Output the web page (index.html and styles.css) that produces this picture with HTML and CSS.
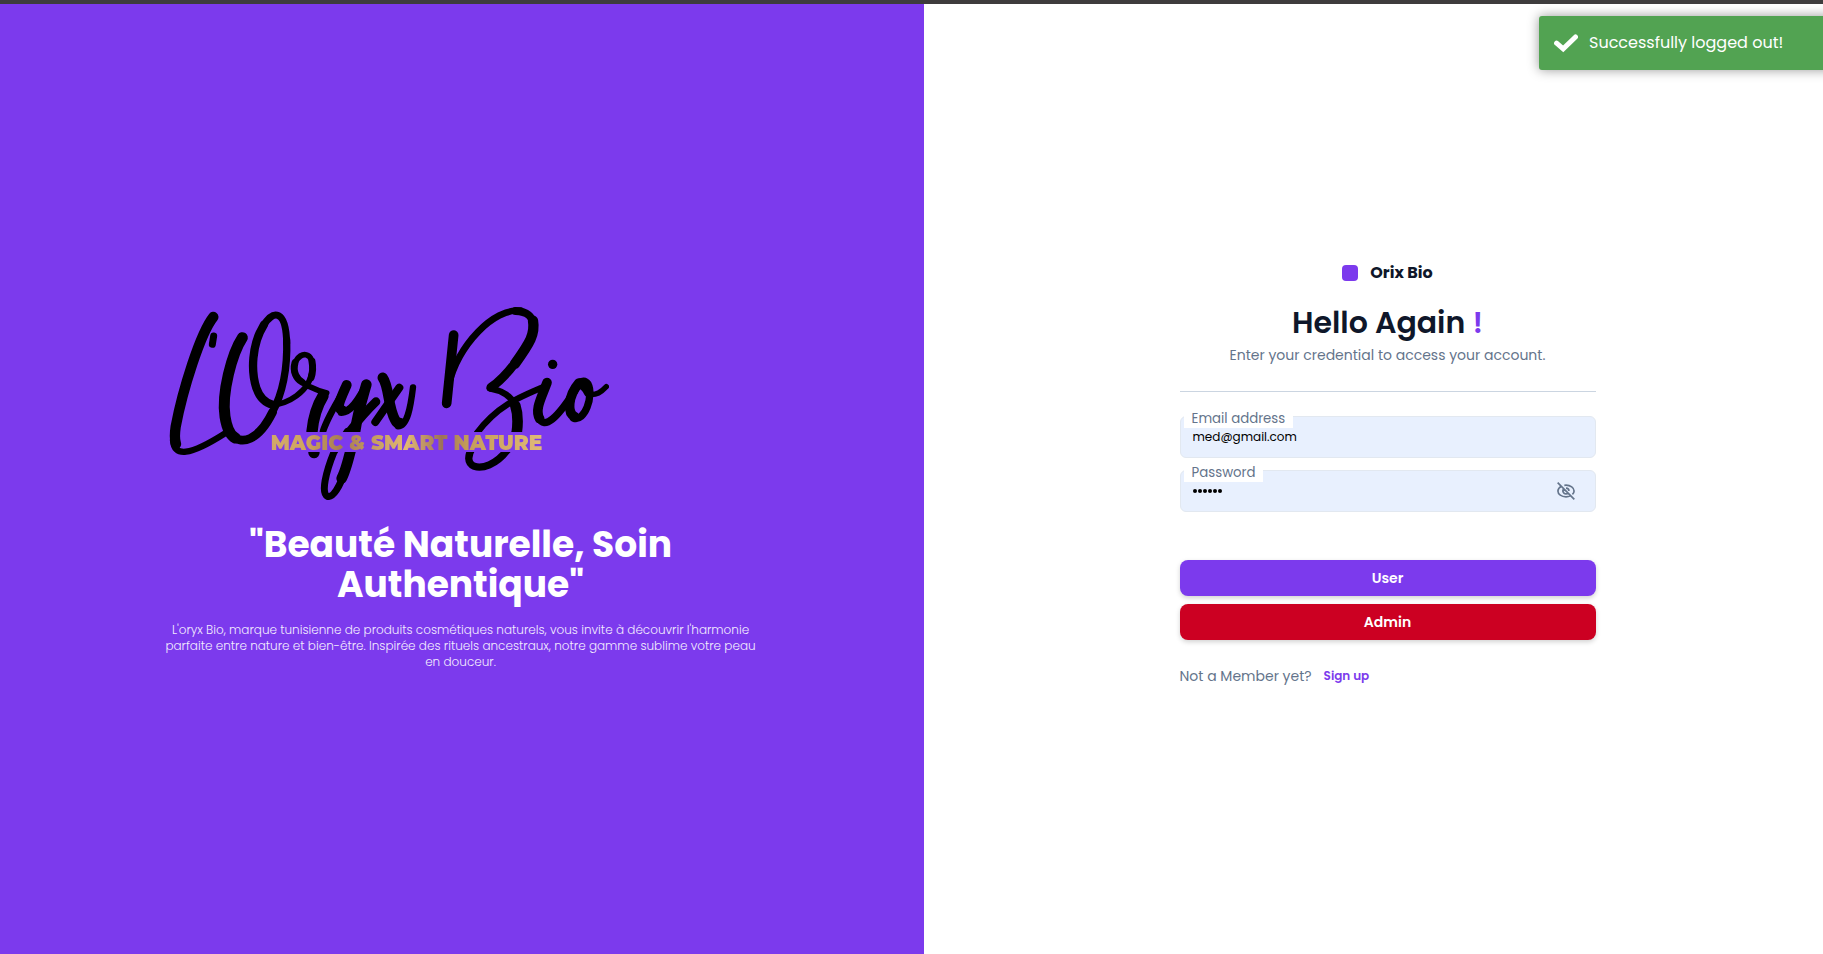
FILE: index.html
```html
<!DOCTYPE html>
<html lang="en">
<head>
<meta charset="utf-8">
<title>Orix Bio</title>
<link rel="stylesheet" href="styles.css">
</head>
<body>
<div class="topbar"></div>
<main class="page">
  <section class="hero">
    <div class="hero-inner">
      <svg class="logo" viewBox="0 0 1440 660" role="img" aria-label="L'Oryx Bio">
        <defs>
          <linearGradient id="gold" x1="0" x2="1">
            <stop offset="0" stop-color="#d2a969"/><stop offset=".12" stop-color="#d0a65f"/>
            <stop offset=".26" stop-color="#a77b53"/><stop offset=".37" stop-color="#c39a60"/>
            <stop offset=".5" stop-color="#e2b873"/><stop offset=".63" stop-color="#9d7158"/>
            <stop offset=".72" stop-color="#c39b58"/><stop offset=".88" stop-color="#d5ac68"/>
            <stop offset="1" stop-color="#e0bb7a"/>
          </linearGradient>
          <clipPath id="band"><path d="M0 0H1440V426H345V486H1440V660H0z"/></clipPath>
        </defs>
        <g class="script" clip-path="url(#band)">
          <path stroke-width="31" d="M190 81C151 130 98 300 77 410Q72 445 78 462"/>
          <path stroke-width="19" d="M69 450C72 502 118 498 225 430"/>
          <path stroke-width="21" d="M191 138L187 163"/>
          <path stroke-width="33" d="M277 143C246 190 214 310 225 380C232 424 244 438 256 444"/>
          <path stroke-width="26" d="M240 428C272 474 328 448 368 366"/>
          <path stroke-width="22" d="M366 370C398 310 413 240 410 150"/>
          <path stroke-width="21" d="M410 160C408 58 370 58 340 107"/>
          <path stroke-width="25" d="M342 104C304 165 303 245 319 294C330 326 348 340 370 345"/>
          <path stroke-width="17" d="M360 343C410 347 480 305 487 240C491 184 452 183 436 216C420 256 452 287 530 309"/>
          <path stroke-width="21" d="M435 218C427 246 441 268 456 276M486 214Q491 240 483 264"/>
          <path stroke-width="34" d="M519 318C498 352 490 384 486 424L492 488"/>
          <path stroke-width="20" d="M519 424C530 390 553 350 577 310"/>
          <path stroke-width="30" d="M590 285C568 335 558 353 577 361"/>
          <path stroke-width="22" d="M574 367C604 366 625 328 648 288"/>
          <path stroke-width="32" d="M649 284C636 330 624 365 616 420C602 480 593 530 575 565"/>
          <path stroke-width="21" d="M585 542C570 590 549 624 532 619C512 610 528 545 552 486L592 424"/>
          <path stroke-width="26" d="M597 427C618 400 650 362 678 335"/>
          <path stroke-width="31" d="M698 263C718 290 713 350 735 389Q742 405 751 399"/>
          <path stroke-width="24" d="M748 293L676 396"/>
          <path stroke-width="19" d="M744 409C773 408 782 350 789 292"/>
          <path stroke-width="29" d="M911 135L890 340"/>
          <path stroke-width="20" d="M896 285C925 165 1030 54 1112 62"/>
          <path stroke-width="24" d="M1097 63C1134 65 1147 79 1150 105"/>
          <path stroke-width="31" d="M1149 92C1156 132 1140 158 1095 221"/>
          <path stroke-width="27" d="M1101 212C1074 248 1045 278 1023 292"/>
          <path stroke-width="19" d="M1019 295C1058 302 1085 318 1098 350"/>
          <path stroke-width="32" d="M1096 347Q1107 380 1100 430L1070 475"/>
          <path stroke-width="22" d="M1072 480C1037 526 996 536 973 529C950 520 954 495 966 475"/>
          <path stroke-width="19" d="M980 430C1040 350 1100 324 1190 287"/>
          <path stroke-width="29" d="M1191 278C1175 322 1153 359 1169 386"/>
          <path stroke-width="22" d="M1166 382C1183 422 1222 383 1274 303"/>
          <circle cx="1208" cy="223" r="14" fill="#000" stroke="none"/>
          <path stroke-width="29" d="M1287 279C1252 320 1252 370 1274 380"/>
          <path stroke-width="22" d="M1270 384C1304 398 1332 316 1314 282Q1302 266 1285 280Q1306 292 1313 309"/>
          <path stroke-width="16" d="M1316 313C1340 316 1353 307 1369 290"/>
        </g>
        <text class="tagline" x="362" y="481" textLength="815" lengthAdjust="spacingAndGlyphs" fill="url(#gold)">MAGIC &amp; SMART NATURE</text>
      </svg>
      <h1 class="headline">"Beauté Naturelle, Soin<br>Authentique"</h1>
      <p class="blurb">L'oryx Bio, marque tunisienne de produits cosmétiques naturels, vous invite à découvrir l'harmonie<br>parfaite entre nature et bien-être. Inspirée des rituels ancestraux, notre gamme sublime votre peau<br>en douceur.</p>
    </div>
  </section>
  <section class="login">
    <form class="card">
      <div class="brand"><i class="brand-mark"></i><span class="brand-name">Orix Bio</span></div>
      <h2 class="title">Hello Again <span class="accent">!</span></h2>
      <p class="sub">Enter your credential to access your account.</p>
      <hr class="rule">
      <div class="field">
        <label class="label">Email address</label>
        <span class="value">med@gmail.com</span>
      </div>
      <div class="field">
        <label class="label">Password</label>
        <span class="dots"><i></i><i></i><i></i><i></i><i></i><i></i></span>
        <svg class="eye" viewBox="0 0 24 24"><path d="M2 2l20 20M6.700 6.200C4 7.500 2.300 9.600 2.300 12c0 4 4.300 7 9.700 7 1.900 0 3.700-.4 5.200-1.200M10 5.200c.7-.1 1.300-.2 2-.2 5.400 0 9.700 3 9.700 7 0 1.500-.8 2.900-2 4M12 8.500a3.500 3.500 0 0 1 3.500 3.500M9.500 9.500a3.500 3.500 0 0 0 5 5"/></svg>
      </div>
      <div class="actions">
        <button type="button" class="btn user">User</button>
        <button type="button" class="btn admin">Admin</button>
      </div>
      <div class="foot"><span>Not a Member yet?</span><a class="signup">Sign up</a></div>
    </form>
  </section>
</main>
<aside class="toast">
  <svg class="check" viewBox="0 0 24 20"><path d="M2.600 10.200L9.200 15.800L21.500 4"/></svg>
  <span class="toast-text">Successfully logged out!</span>
</aside>
</body>
</html>
```
FILE: styles.css
```css
* { box-sizing: border-box; }
body {
  margin: 0;
  height: 954px;
  overflow: hidden;
  display: flex;
  flex-direction: column;
  background: #fff;
  color: #0f172a;
  font-family: Poppins, Inter, "Open Sans", sans-serif;
}
h1, h2, p { margin: 0; }
.topbar { height: 4px; background: #3e3c3d; }
.page { flex: 1; display: flex; }

.hero {
  width: 924px;
  background: #7c3aed;
  color: #fff;
  padding: 286px 0 0 150px;
}
.hero-inner { width: 621px; text-align: center; }
.logo { display: block; width: 480px; height: 220px; filter: blur(.6px); }
.script { fill: none; stroke: #000; stroke-linecap: round; stroke-linejoin: round; }
.tagline { font: 900 62px Montserrat, Poppins, Inter, sans-serif; }
.headline { margin-top: 15px; font-size: 36px; line-height: 40px; font-weight: 700; white-space: nowrap; }
.blurb { margin-top: 17px; font-size: 12px; line-height: 16px; font-weight: 300; color: #f3ecfe; white-space: nowrap; }

.login { flex: 1; padding: 257px 0 0 256px; }
.card { width: 416px; }
.brand { display: flex; align-items: center; justify-content: center; gap: 12px; height: 24px; margin-left: -1px; }
.brand-mark { width: 16px; height: 16px; border-radius: 4px; background: #7c3aed; }
.brand-name { font-size: 16px; font-weight: 700; margin-top: -1px; }
.title { margin-top: 20px; font-size: 30px; line-height: 36px; font-weight: 600; text-align: center; margin-left: -1px; }
.accent { color: #7c3aed; }
.sub { margin-top: 4px; font-size: 14px; line-height: 20px; color: #64748b; text-align: center; margin-left: -1px; }
.rule { margin: 26px 0 24px; border: 0; height: 1px; background: #cbd5e1; }
.field {
  position: relative;
  height: 42px;
  margin-bottom: 12px;
  padding: 0 19px 0 11.500px;
  display: flex;
  align-items: center;
  background: #e8f0fe;
  border: 1px solid #e2e8f0;
  border-radius: 6px;
}
.label {
  position: absolute;
  left: 3px;
  top: -6px;
  height: 17px;
  padding: 0 7.600px;
  background: #fff;
  color: #64748b;
  font-size: 13.3px;
  line-height: 15px;
  white-space: nowrap;
}
.value { font-size: 12px; color: #000; }
.dots { display: flex; gap: 1px; }
.dots i { width: 4px; height: 4px; border-radius: 50%; background: #000; }
.eye { width: 20px; height: 20px; margin-left: auto; fill: none; stroke: #64748b; stroke-width: 2; }
.actions { margin-top: 48px; display: flex; flex-direction: column; gap: 8px; }
.btn {
  height: 36px;
  padding: 0 1px 0 0;
  border: 0;
  border-radius: 8px;
  color: #fff;
  font: inherit;
  font-size: 14px;
  font-weight: 600;
  box-shadow: 0 2px 5px rgba(0, 0, 0, .18);
}
.user { background: #7c3aed; }
.admin { background: #cc0022; }
.foot { margin-top: 26px; height: 20px; display: flex; align-items: center; gap: 12px; margin-left: -.5px; color: #64748b; font-size: 14px; }
.signup { color: #7c3aed; font-size: 12px; font-weight: 600; }

.toast {
  position: absolute;
  left: 1539px;
  top: 16px;
  width: 300px;
  height: 54px;
  padding-left: 15px;
  display: flex;
  align-items: center;
  gap: 11px;
  background: #52a352;
  border-radius: 3px 0 0 3px;
  box-shadow: 0 0 12px #999;
  color: #fff;
  font-size: 16px;
}
.toast-text { margin-top: -1px; }
.check { width: 24px; height: 20px; fill: none; stroke: #fff; stroke-width: 5; stroke-linecap: round; }
```
